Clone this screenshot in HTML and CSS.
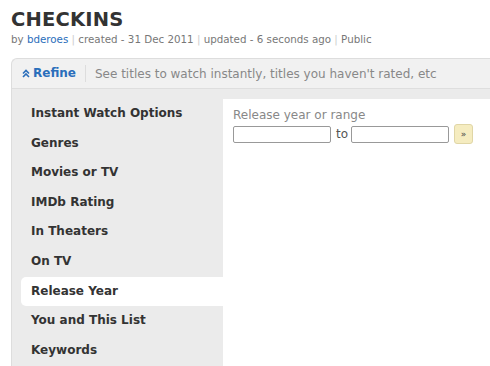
FILE: index.html
```html
<!DOCTYPE html>
<html lang="en">
<head>
    <meta charset="UTF-8">
    <title>Checkins</title>
    <link rel="stylesheet" href="styles.css">
</head>
<body>
    <div class="page">
        <h1 class="list-title">CHECKINS</h1>
        <p class="byline">
            by <a href="#">bderoes</a> <span class="sep">|</span> created - 31 Dec 2011
            <span class="sep">|</span> updated - 6 seconds ago <span class="sep">|</span> Public
        </p>

        <div class="refine">
            <div class="refine-head">
                <a class="refine-toggle" href="#">
                    <svg class="chev" width="8" height="9" viewBox="0 0 8 9">
                        <path d="M1 4.5 L4 1.5 L7 4.5 M1 8 L4 5 L7 8" fill="none" stroke="currentColor" stroke-width="1.6"/>
                    </svg>Refine</a>
                <span class="refine-hint">See titles to watch instantly, titles you haven't rated, etc</span>
            </div>
            <div class="refine-body">
                <ul class="facets">
                    <li>Instant Watch Options</li>
                    <li>Genres</li>
                    <li>Movies or TV</li>
                    <li>IMDb Rating</li>
                    <li>In Theaters</li>
                    <li>On TV</li>
                    <li class="active">Release Year</li>
                    <li>You and This List</li>
                    <li>Keywords</li>
                </ul>
                <div class="facet-panel">
                    <label class="facet-label" for="year-from">Release year or range</label>
                    <div class="range-row">
                        <input type="text" id="year-from">
                        <span class="to">to</span>
                        <input type="text" id="year-to">
                        <button class="go">&raquo;</button>
                    </div>
                </div>
            </div>
        </div>
    </div>
</body>
</html>
```

FILE: styles.css
```css
* {
    box-sizing: border-box;
    margin: 0;
    padding: 0;
}

html, body {
    height: 366px;
    overflow: hidden;
}

body {
    font-family: "DejaVu Sans", Verdana, sans-serif;
    background: #fff;
    color: #333;
}

.page {
    padding: 8px 0 0 11px;
}

.list-title {
    font-size: 19.5px;
    font-weight: bold;
    color: #333;
    line-height: 24px;
    letter-spacing: 0.2px;
}

.byline {
    font-size: 10.3px;
    color: #777;
    line-height: 13px;
    margin-top: 1px;
}

.byline a {
    color: #2a6ebb;
    text-decoration: none;
}

.byline .sep {
    color: #ccc;
}

.refine {
    margin-top: 12px;
    height: 320px;
    display: flex;
    flex-direction: column;
    border: 1px solid #ddd;
    border-right: none;
    border-bottom: none;
    border-radius: 6px 0 0 0;
    background: #ebebeb;
}

.refine-head {
    height: 30px;
    flex-shrink: 0;
    display: flex;
    align-items: center;
    background: #f1f1f1;
    border-bottom: 1px solid #dedede;
    border-radius: 6px 0 0 0;
    padding-left: 10px;
}

.refine-toggle {
    font-size: 12px;
    font-weight: bold;
    color: #2a6ebb;
    text-decoration: none;
    display: flex;
    align-items: center;
    padding-right: 9px;
    border-right: 1px solid #ddd;
    line-height: 17px;
}

.chev {
    margin-right: 3px;
}

.refine-hint {
    font-size: 12px;
    color: #888;
    padding-left: 9px;
    white-space: nowrap;
}

.refine-body {
    flex: 1;
    display: flex;
    padding-top: 10px;
}

.facets {
    list-style: none;
    width: 211px;
    padding: 0 0 0 9px;
}

.facets li {
    font-size: 12px;
    font-weight: bold;
    color: #333;
    height: 29.6px;
    line-height: 28px;
    padding-left: 10px;
}

.facets li.active {
    background: #fff;
    border-radius: 5px 0 0 5px;
}

.facet-panel {
    flex: 1;
    background: #fff;
    padding: 9px 10px 0;
}

.facet-label {
    display: block;
    font-size: 12px;
    color: #888;
    line-height: 15px;
}

.range-row {
    display: flex;
    align-items: center;
    margin-top: 1px;
}

.range-row input {
    width: 98px;
    height: 17px;
    border: 1px solid #999;
    border-radius: 2px;
    font-size: 12px;
}

.to {
    font-size: 12px;
    color: #555;
    margin: 0 3px 0 5px;
}

.go {
    width: 19px;
    height: 20px;
    margin-left: 5px;
    background: #f5ecc0;
    border: 1px solid #e0d6a6;
    border-radius: 3px;
    font-size: 9px;
    color: #444;
    font-family: "DejaVu Sans", sans-serif;
}
```
